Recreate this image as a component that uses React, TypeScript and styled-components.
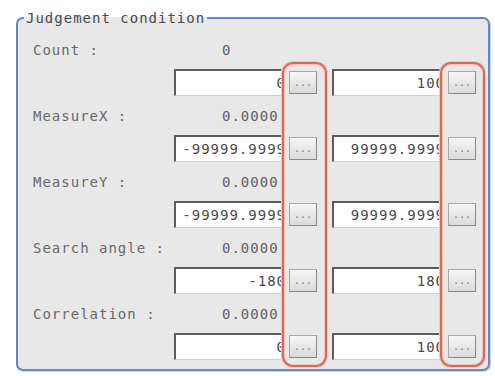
import React from "react";
import styled, { createGlobalStyle } from "styled-components";

const GlobalStyle = createGlobalStyle`
  html, body {
    margin: 0;
    padding: 0;
    background: #fff;
  }
  body {
    font-family: "DejaVu Sans Mono", "Liberation Mono", monospace;
  }
`;

const conditions = [
  { label: "Count :", value: "0", min: "0", max: "100" },
  { label: "MeasureX :", value: "0.0000", min: "-99999.9999", max: "99999.9999" },
  { label: "MeasureY :", value: "0.0000", min: "-99999.9999", max: "99999.9999" },
  { label: "Search angle :", value: "0.0000", min: "-180", max: "180" },
  { label: "Correlation :", value: "0.0000", min: "0", max: "100" },
];

const App = () => {
  return (
    <Page>
      <GlobalStyle />
      <Frame>
        <Title>Judgement condition</Title>
        <Body>
          {conditions.map((c) => (
            <React.Fragment key={c.label}>
              <LabelRow>
                <Label>{c.label}</Label>
                <Value>{c.value}</Value>
              </LabelRow>
              <InputRow>
                <Field $w={107}>
                  <FieldText>{c.min}</FieldText>
                </Field>
                <DotsButton>...</DotsButton>
                <Field $w={108} $gap={15}>
                  <FieldText>{c.max}</FieldText>
                </Field>
                <DotsButton>...</DotsButton>
              </InputRow>
            </React.Fragment>
          ))}
        </Body>
      </Frame>
      <Highlight $left={282} />
      <Highlight $left={440} />
    </Page>
  );
};

export default App;

const Page = styled.div`
  position: relative;
  width: 495px;
  height: 376px;
  box-sizing: border-box;
  padding: 11px 0 0 16px;
  overflow: hidden;
`;

const Frame = styled.fieldset`
  width: 474px;
  box-sizing: border-box;
  margin: 0;
  padding: 0;
  border: 2px solid #6088c6;
  border-radius: 7px;
  background: #e8e8e8;
  box-shadow: 1px 1px 0 #c9d4e8;
  min-inline-size: 0;
`;

const Title = styled.legend`
  margin-left: 6px;
  padding: 0 2px;
  font-size: 14px;
  line-height: 14px;
  letter-spacing: 1px;
  color: #4a4a4a;
`;

const Body = styled.div`
  padding: 5px 0 9px 15px;
  font-size: 14px;
  letter-spacing: 1px;
`;

const LabelRow = styled.div`
  display: flex;
  align-items: center;
  height: 39px;
`;

const Label = styled.span`
  width: 189px;
  color: #686868;
`;

const Value = styled.span`
  color: #616161;
`;

const InputRow = styled.div`
  display: flex;
  align-items: center;
  height: 27px;
  padding-left: 141px;
`;

const Field = styled.div<{ $w: number; $gap?: number }>`
  width: ${(p) => p.$w}px;
  height: 27px;
  margin-left: ${(p) => p.$gap ?? 0}px;
  box-sizing: border-box;
  background: #fff;
  border-top: 2px solid #5c5c5c;
  border-left: 2px solid #5c5c5c;
  border-bottom: 1px solid #d2d2d2;
  overflow: hidden;
  white-space: nowrap;
  text-align: right;
  line-height: 24px;
  color: #484848;
`;

const FieldText = styled.span`
  margin-right: -5px;
`;

const DotsButton = styled.div`
  width: 28px;
  height: 23px;
  margin-left: 8px;
  box-sizing: border-box;
  display: flex;
  align-items: center;
  justify-content: center;
  border: 1px solid #a8a8a8;
  border-right-color: #888;
  border-bottom-color: #888;
  background: linear-gradient(#f6f6f6, #dadada);
  color: #7a7a7a;
  font-size: 10px;
  letter-spacing: 0;
`;

const Highlight = styled.div<{ $left: number }>`
  position: absolute;
  top: 62px;
  left: ${(p) => p.$left}px;
  width: 45px;
  height: 305px;
  box-sizing: border-box;
  border: 2px solid #d9685c;
  border-radius: 11px;
  box-shadow: 0 0 0 1px #f3c6ba, inset 0 0 0 1px #f3c6ba;
  pointer-events: none;
`;
